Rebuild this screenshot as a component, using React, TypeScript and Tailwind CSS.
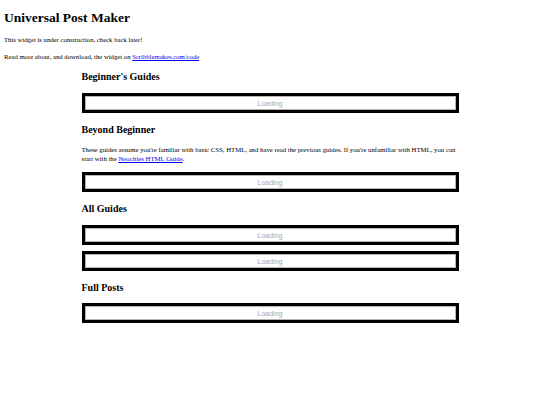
const serif = { fontFamily: '"Liberation Serif", "Times New Roman", serif' };

function LoadingFrame({ className = '' }: { className?: string }) {
  return (
    <div className={`border-[3px] border-black bg-white ${className}`}>
      <div className="h-[14px] border border-[#b5b5b5] flex items-center justify-center">
        <span className="text-[7px] leading-none text-[#a8a8a8] font-['Liberation_Sans',Arial,sans-serif]">
          Loading
        </span>
      </div>
    </div>
  );
}

function SectionTitle({ children, className = '' }: { children: React.ReactNode; className?: string }) {
  return <h2 className={`text-[10px] leading-[10px] font-bold text-black ${className}`}>{children}</h2>;
}

export default function App() {
  return (
    <div className="min-h-[405px] w-[540px] bg-white text-black px-[4px]" style={serif}>
      <h1 className="pt-[10px] text-[13.5px] leading-[16px] font-bold">Universal Post Maker</h1>
      <p className="mt-[10px] text-[6.7px] leading-[8px]">This widget is under construction, check back later!</p>
      <p className="mt-[9px] text-[6.7px] leading-[8px]">
        Read more about, and download, the widget on{' '}
        <a href="#" className="text-[#0000ee] underline">Scribblemakes.com/code</a>
      </p>

      <div className="w-[377px] mx-auto">
        <SectionTitle className="mt-[11px]">Beginner's Guides</SectionTitle>
        <LoadingFrame className="mt-[11px]" />

        <SectionTitle className="mt-[12px]">Beyond Beginner</SectionTitle>
        <p className="mt-[10px] text-[6.75px] leading-[9px]">
          These guides assume you're familiar with basic CSS, HTML, and have read the previous guides. If you're unfamiliar with HTML, you can
          start with the{' '}
          <a href="#" className="text-[#0000ee] underline">Neocities HTML Guide</a>.
        </p>
        <LoadingFrame className="mt-[9px]" />

        <SectionTitle className="mt-[12px]">All Guides</SectionTitle>
        <LoadingFrame className="mt-[11px]" />
        <LoadingFrame className="mt-[6px]" />

        <SectionTitle className="mt-[12px]">Full Posts</SectionTitle>
        <LoadingFrame className="mt-[10px]" />
      </div>
    </div>
  );
}
